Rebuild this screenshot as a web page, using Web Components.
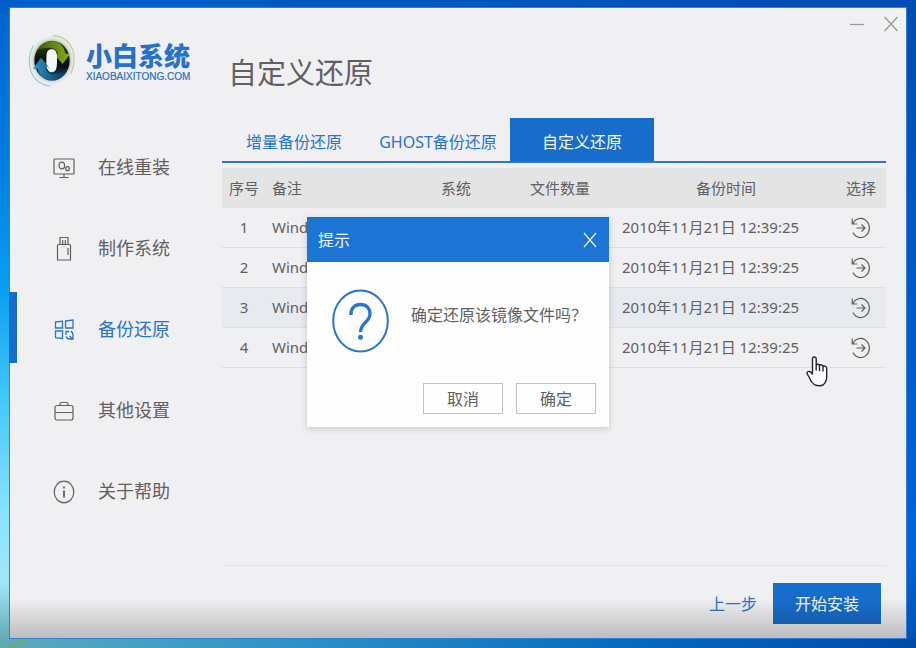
<!DOCTYPE html>
<html lang="zh-CN">
<head>
<meta charset="utf-8">
<title>小白系统</title>
<style>
  html { height: 100%; }
  body {
    margin: 0;
    min-height: 100vh;
    box-sizing: border-box;
    padding: 7px 9px 9px;
    display: flex;
    font-family: "Noto Sans", "Noto Sans CJK SC", sans-serif;
    color: #606062;
    --blue: #186dcb;
    background:
      linear-gradient(90deg, #0060cc, #0054bc 60%, #004fb4) top / 100% 7px no-repeat,
      linear-gradient(150deg, transparent 42%, #6fae4a 47% 53%, transparent 58%) 8px 100% / 20px 9px no-repeat,
      linear-gradient(90deg, #62a9b4, #4ba3bf 12%, #2b8ec6 35%, #0768bd 70%, #004aa8) bottom / 100% 9px no-repeat,
      linear-gradient(180deg, #0062cc, #007de0 25%, #0aa0f0 45%, #40c4f6 60%, #8ce4fc 80%, #9fe6f8 90%, #5ba0a8) left / 9px 100% no-repeat,
      linear-gradient(180deg, #004eb0, #0058c8 40%, #0064da 85%, #0050b4) right / 9px 100% no-repeat;
  }
</style>
</head>
<body>
<app-window>
  <brand-logo slot="side"></brand-logo>
  <side-nav slot="side"></side-nav>
  <page-heading slot="main">自定义还原</page-heading>
  <tab-strip slot="main"></tab-strip>
  <backup-table slot="main"></backup-table>
  <wizard-footer slot="main"></wizard-footer>
  <confirm-dialog slot="overlay" heading="提示">确定还原该镜像文件吗？</confirm-dialog>
  <hand-pointer slot="overlay"></hand-pointer>
</app-window>

<script>
const define = (name, html) => {
  const tpl = document.createElement('template');
  tpl.innerHTML = `<style>
    *, ::before, ::after { box-sizing: border-box; }
    button { font: inherit; color: inherit; background: none; border: 0; padding: 0; margin: 0; cursor: pointer; }
    a { color: inherit; text-decoration: none; }
    svg { display: block; flex: none; }
  </style>` + html;
  customElements.define(name, class extends HTMLElement {
    constructor() {
      super();
      this.attachShadow({ mode: 'open' }).append(tpl.content.cloneNode(true));
      const h = this.shadowRoot.querySelector('[data-heading]');
      if (h) h.textContent = this.getAttribute('heading');
    }
  });
};

define('app-window', `<style>
  :host { flex: 1; position: relative; display: grid; grid-template-columns: 212px minmax(0, 1fr);
    background: #f0eff1; border: 1px solid #2f80d6; }
  .side { display: flex; flex-direction: column; }
  .main { display: flex; flex-direction: column; padding: 0 20px 14px 0; }
  .controls { position: absolute; top: 6px; right: 5px; display: flex; gap: 14px; color: #98989a; }
  .controls button { width: 20px; height: 20px; display: grid; place-items: center; }
  .shade { position: absolute; inset: auto 0 0 0; height: 40px; pointer-events: none;
    background: linear-gradient(180deg, rgba(0,0,0,0), rgba(0,0,0,.21)); }
</style>
<aside class="side"><slot name="side"></slot></aside>
<main class="main"><slot name="main"></slot></main>
<div class="controls">
  <button aria-label="最小化"><svg width="16" height="16" stroke="currentColor" stroke-width="1.3"><path d="M1 8.500h14"/></svg></button>
  <button aria-label="关闭"><svg width="16" height="16" stroke="currentColor" stroke-width="1.3"><path d="M1.500 1l13 14M14.500 1l-13 14"/></svg></button>
</div>
<div class="shade"></div>
<slot name="overlay"></slot>`);

define('brand-logo', `<style>
  :host { display: flex; align-items: center; gap: 10px; padding: 27px 0 0 18px; }
  .words { display: flex; flex-direction: column; padding-top: 4px; color: #2671cb; }
  .zh { font: 900 26px/28px "Liberation Sans", "Noto Sans CJK SC", sans-serif; }
  .en { font: 10px/12px "Liberation Sans", sans-serif; -webkit-text-stroke: 0.2px; }
</style>
<svg width="48" height="52" viewBox="83 104 144 156" fill="none" aria-hidden="true">
  <defs>
    <radialGradient id="halo"><stop offset=".74" stop-color="#9fb39f" stop-opacity=".75"/><stop offset="1" stop-color="#e8efe8" stop-opacity="0"/></radialGradient>
    <linearGradient id="dark" x1="0" y1="0" x2="0" y2="1"><stop offset="0" stop-color="#35520c"/><stop offset=".4" stop-color="#10160c"/><stop offset=".65" stop-color="#061018"/><stop offset="1" stop-color="#12608c"/></linearGradient>
    <linearGradient id="green" x1="0" x2="1"><stop offset="0" stop-color="#3f5c10"/><stop offset="1" stop-color="#8aaf1d"/></linearGradient>
    <linearGradient id="azure" x1="0" x2="1"><stop offset="0" stop-color="#2a97cf"/><stop offset="1" stop-color="#0a2f48"/></linearGradient>
  </defs>
  <ellipse cx="155" cy="180" rx="70" ry="76" fill="url(#halo)"/>
  <ellipse cx="155" cy="181" rx="53" ry="60" fill="url(#dark)"/>
  <path d="M111 148Q127 123 156 122Q188 124 196 160H210L187 191L160 161H173Q168 143 152 143Q133 141 111 148Z" fill="url(#green)"/>
  <path d="M200 211Q182 240 154 238Q118 235 112 205H98L122 172L151 205H137Q143 222 158 221Q179 222 200 211Z" fill="url(#azure)"/>
  <path d="M151 147C163 144 171 152 170 174C170 195 171 215 155 216C145 216 140 208 139 196L148 205L138 190C139 171 135 150 151 147Z" fill="#f6f7f8"/>
  <path d="M157 106Q199 107 217 148Q229 185 211 221" stroke="#c3ca90" stroke-width="3.500"/>
  <path d="M151 257Q108 253 91 211Q80 170 99 136" stroke="#98c8da" stroke-width="3.500"/>
</svg>
<div class="words"><span class="zh">小白系统</span><span class="en">XIAOBAIXITONG.COM</span></div>`);

define('nav-item', `<style>
  :host { display: block; }
  a { display: flex; align-items: center; gap: 22px; height: 71px; padding: 2px 0 0 35px; border-left: 8px solid transparent; font-size: 18px; line-height: 28px; }
  :host([active]) a { color: #2475d0; border-left-color: var(--blue); }
  ::slotted(svg) { width: 24px; height: 26px; flex: none; display: block; margin-top: 2px; }
</style><a href="#"><slot name="icon"></slot><slot></slot></a>`);

define('side-nav', `<style>
  :host { display: block; margin-left: -1px; padding-top: 43px; }
  nav { display: grid; gap: 10px; }
</style>
<nav>
  <nav-item><svg slot="icon" viewBox="0 0 24 26" fill="none" stroke="currentColor" stroke-width="1.2"><rect x="2" y="4" width="20" height="15" rx=".5"/><path d="M12 19v3.500M7.500 22.500h9"/><ellipse cx="9.800" cy="10.500" rx="2.800" ry="3.300"/><ellipse cx="15.500" cy="13.700" rx="1.800" ry="2"/></svg>在线重装</nav-item>
  <nav-item><svg slot="icon" viewBox="0 0 24 26" fill="none" stroke="currentColor" stroke-width="1.2"><path d="M5.500 9.500q0-1 1-1h11q1 0 1 1v14.500h-13zM8 8.500v-7h8v7M10.700 4v4.500M13.300 4v4.500M16 12v7"/></svg>制作系统</nav-item>
  <nav-item active><svg slot="icon" viewBox="0 0 24 26" fill="none" stroke="currentColor" stroke-width="1.3"><path d="M3.500 5l7-.8v6.800h-7zM13.500 4l7.500-1v8h-7.500zM3.500 14h7v7.500l-7-.8zM14 18v-3.500h3M18.500 14.300q2.500.7 2.500 3.700v4h-4.500M14 19.500q1 2.500 3.500 2.500M17.500 19l3.500 3"/></svg>备份还原</nav-item>
  <nav-item><svg slot="icon" viewBox="0 0 24 26" fill="none" stroke="currentColor" stroke-width="1.2"><rect x="3" y="7.500" width="18" height="14.500" rx="2"/><path d="M3 14.500h18M8 7.500V6q0-1.500 1.500-1.500h5Q16 4.500 16 6v1.500"/></svg>其他设置</nav-item>
  <nav-item><svg slot="icon" viewBox="0 0 24 26" fill="none" stroke="currentColor" stroke-width="1.2"><ellipse cx="12" cy="13" rx="9.800" ry="10.900"/><path d="M12 11.500v7M12 7.500v2" stroke-width="1.800"/></svg>关于帮助</nav-item>
</nav>`);

define('page-heading', `<style>
  :host { display: block; padding: 40px 0 0 6px; }
  h1 { margin: 0; font-size: 29px; line-height: 50px; font-weight: 400; }
</style><h1><slot></slot></h1>`);

define('tab-strip', `<style>
  :host { display: block; margin-top: 20px; border-bottom: 2px solid #2a78cf; }
  div { display: flex; }
  button { flex: 0 0 144px; height: 43px; font-size: 16px; line-height: 24px; color: #2475d0; padding-top: 4px; white-space: nowrap; }
  button[aria-selected=true] { background: var(--blue); color: #f4f8fc; }
</style>
<div role="tablist"><button role="tab" aria-selected="false">增量备份还原</button><button role="tab" aria-selected="false">GHOST备份还原</button><button role="tab" aria-selected="true">自定义还原</button></div>`);

const row = n => `<tr${n === 3 ? ' class="hover"' : ''}><td>${n}</td><td class="note">Wind</td><td></td><td></td><td class="time">2010年11月21日 12:39:25</td><td><button aria-label="还原"><svg width="20" height="22" viewBox="0 0 20 22" fill="none" stroke="currentColor" stroke-width="1.2"><path d="M2 6.500A8.700 9.500 0 1 1 2 15.500M1.200 1.800V7h5M5.500 11h8.500M10.500 7.500L14 11l-3.500 3.500"/></svg></button></td></tr>`;
define('backup-table', `<style>
  :host { display: block; margin-top: 5px; flex: 1; border-bottom: 1px solid #e4e3e5; }
  table { width: 100%; table-layout: fixed; border-collapse: separate; border-spacing: 0; font-size: 15px; line-height: 24px; white-space: nowrap; }
  th, td { height: 40px; padding: 0 0 1px; font-weight: 400; text-align: center; }
  th { background: #e5e4e5; }
  td { border-bottom: 1px solid #dedee0; }
  .hover td { background: #e7eaee; }
  .note { text-align: left; padding-left: 6px; }
  .time { text-align: left; padding-left: 6px; }
  td button { display: inline-grid; vertical-align: middle; }
</style>
<table>
  <colgroup><col style="width:44px"><col><col style="width:96px"><col style="width:112px"><col style="width:220px"><col style="width:50px"></colgroup>
  <thead><tr><th>序号</th><th class="note">备注</th><th>系统</th><th>文件数量</th><th>备份时间</th><th>选择</th></tr></thead>
  <tbody>${[1, 2, 3, 4].map(row).join('')}</tbody>
</table>`);

define('wizard-footer', `<style>
  :host { display: flex; justify-content: flex-end; align-items: center; gap: 16px; padding: 17px 5px 0 0; font-size: 16px; line-height: 24px; }
  a { color: #2475d0; }
  button { width: 108px; height: 41px; background: var(--blue); color: #f4f8fc; }
</style>
<a href="#">上一步</a><button>开始安装</button>`);

define('confirm-dialog', `<style>
  :host { position: absolute; inset: 0; display: grid; place-items: center; padding-bottom: 2px; pointer-events: none; }
  dialog { position: static; margin: 0; padding: 0; border: 0; width: 302px; background: #fefefe; color: inherit; box-shadow: 0 2px 7px rgba(0,0,0,.16); pointer-events: auto; font-size: 16px; line-height: 24px; }
  header { display: flex; justify-content: space-between; align-items: center; height: 45px; padding: 0 11px; background: #1c75d4; color: #f4f8fc; }
  .body { display: flex; gap: 22px; padding: 27px 25px 0; }
  p { margin: 14px 0 0; white-space: nowrap; }
  .actions { display: flex; justify-content: flex-end; gap: 13px; padding: 30px 13px 13px; }
  .actions button { width: 80px; height: 31px; border: 1px solid #c2c2c4; }
</style>
<dialog open aria-labelledby="t">
  <header><span id="t" data-heading></span><button aria-label="关闭"><svg width="16" height="16" stroke="currentColor" stroke-width="1.200"><path d="M2 1l12 14M14 1L2 15"/></svg></button></header>
  <div class="body">
    <svg width="57" height="64" viewBox="0 0 57 64" fill="none" stroke="#2875ca" aria-hidden="true"><ellipse cx="28.500" cy="32" rx="27.300" ry="30.500" stroke-width="2"/><path d="M19 26C18.500 19 23 15.500 28.500 15.500C34.500 15.500 38 19.500 38 25C38 33 28.500 34 28.500 43" stroke-width="3.300"/><circle cx="28.500" cy="48.300" r="2.500" fill="#2875ca" stroke="none"/></svg>
    <p><slot></slot></p>
  </div>
  <div class="actions"><button>取消</button><button>确定</button></div>
</dialog>`);

define('hand-pointer', `<style>
  :host { position: absolute; left: 796px; top: 348px; pointer-events: none; }
</style>
<svg width="22" height="31" viewBox="0 0 22 31" fill="#fff" stroke="#25252f" stroke-width="1.400" stroke-linejoin="round" stroke-linecap="round" aria-hidden="true"><path d="M6.500 18V3Q6.500 1 8.300 1T10.200 3V8.800Q11.800 7.500 13.500 9Q15.500 8 17 10Q20.700 9.500 20.700 13V21Q20.500 26 17 29Q14 30.500 9 29Q5 26.500 3.500 22L1 17.500Q1 15 3.500 15.500Q5 16 6.500 18Z"/><path d="M10.200 9v5M13.500 9.500v5M17 10.500v4.500" fill="none"/></svg>`);
</script>
</body>
</html>
